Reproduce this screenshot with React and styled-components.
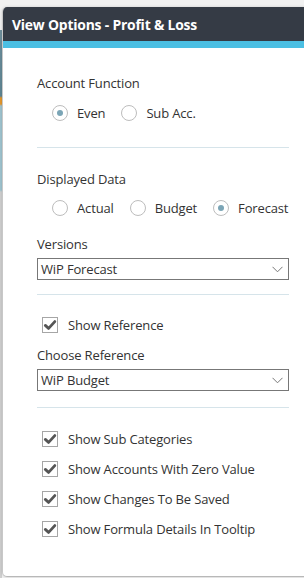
import React, { useState } from 'react'
import styled, { createGlobalStyle } from 'styled-components'

const GlobalStyle = createGlobalStyle`
    html, body {
        margin: 0;
        padding: 0;
        background: #f1f1f1;
        overflow: hidden;
    }
    body {
        font-family: 'Open Sans', 'Liberation Sans', sans-serif;
        font-size: 13px;
        letter-spacing: -0.15px;
        color: #333;
    }
`

const Backdrop = styled.div`
    display: flex;
    height: 578px;
    width: 304px;
    overflow: hidden;
`

const PageEdge = styled.div`
    flex: 0 0 2px;
    margin-top: 30px;
    background: linear-gradient(
        to bottom,
        #6f8f9c 0px,
        #5d8593 66px,
        #e3962c 68px,
        #e3962c 74px,
        #9fc3cf 76px,
        #9fc3cf 160px,
        #cfcfcf 162px,
        #cfcfcf 100%
    );
`

const Dialog = styled.div`
    flex: 0 0 320px;
    margin-top: 7px;
    height: 569px;
    display: flex;
    flex-direction: column;
    background: #fff;
    border-left: 1px solid #c8c8c8;
    border-bottom: 1px solid #b8b8b8;
    border-radius: 5px 0 0 5px;
    overflow: hidden;
    box-shadow: 0 0 3px rgba(0, 0, 0, 0.15);
`

const Header = styled.div`
    height: 34px;
    display: flex;
    align-items: center;
    padding-left: 9px;
    background: #353b45;
    border-bottom: 7px solid #4bbfe3;
    h2 {
        margin: 0;
        color: #fff;
        font-size: 13.9px;
        font-weight: 700;
        letter-spacing: -0.2px;
    }
`

const Body = styled.div`
    width: 252px;
    padding: 26px 0 0 34px;
    display: flex;
    flex-direction: column;
`

const Label = styled.div`
    height: 18px;
    line-height: 18px;
    margin-top: ${p => p.$gap || 0}px;
`

const Divider = styled.hr`
    width: 100%;
    margin: ${p => p.$gap}px 0 0;
    border: none;
    border-top: 1px solid #d6e4ea;
    height: 0;
`

const RadioGroup = styled.div`
    display: flex;
    align-items: center;
    gap: 16px;
    height: 18px;
    margin-top: ${p => p.$gap}px;
    padding-left: 15px;
`

const RadioItem = styled.label`
    display: flex;
    align-items: center;
    gap: 9px;
    cursor: pointer;
    line-height: 18px;
`

const RadioCircle = styled.span`
    box-sizing: border-box;
    width: 16px;
    height: 16px;
    border-radius: 50%;
    border: 1px solid #bdbdbd;
    display: flex;
    align-items: center;
    justify-content: center;
    &::after {
        content: '';
        width: 6px;
        height: 6px;
        border-radius: 50%;
        background: ${p => (p.$checked ? '#7ba5b6' : 'transparent')};
    }
`

const Select = styled.div`
    box-sizing: border-box;
    height: 22px;
    margin-top: 5px;
    border: 1px solid #777;
    display: flex;
    align-items: center;
    justify-content: space-between;
    padding: 0 5px 0 3px;
    line-height: 20px;
    svg {
        display: block;
    }
`

const CheckRow = styled.label`
    display: flex;
    align-items: center;
    gap: 10px;
    height: 18px;
    line-height: 18px;
    margin-top: ${p => p.$gap}px;
    padding-left: 5px;
    cursor: pointer;
`

const CheckBox = styled.span`
    box-sizing: border-box;
    width: 16px;
    height: 16px;
    border: 1px solid #a6a6a6;
    display: flex;
    align-items: center;
    justify-content: center;
    svg {
        display: block;
    }
`

const Chevron = () => (
    <svg width="11" height="7" viewBox="0 0 11 7">
        <path d="M0.5 0.8 L5.5 5.8 L10.5 0.8" fill="none" stroke="#777" strokeWidth="1" />
    </svg>
)

const Tick = () => (
    <svg width="14" height="14" viewBox="0 0 14 14">
        <path
            d="M2.3 7.4 L5.6 10.4 L11.8 3.6"
            fill="none"
            stroke="#555"
            strokeWidth="2.8"
            strokeLinecap="round"
            strokeLinejoin="round"
        />
    </svg>
)

const Radio = ({ label, checked, onSelect }) => (
    <RadioItem onClick={onSelect}>
        <RadioCircle $checked={checked} />
        {label}
    </RadioItem>
)

const Check = ({ label, checked, gap, onToggle }) => (
    <CheckRow $gap={gap} onClick={onToggle}>
        <CheckBox>{checked && <Tick />}</CheckBox>
        {label}
    </CheckRow>
)

const App = () => {
    const [accountFn, setAccountFn] = useState('Even')
    const [dataType, setDataType] = useState('Forecast')
    const [flags, setFlags] = useState({
        reference: true,
        subCategories: true,
        zeroValue: true,
        changes: true,
        formula: true,
    })

    const toggle = key => setFlags(f => ({ ...f, [key]: !f[key] }))

    return (
        <>
            <GlobalStyle />
            <Backdrop>
                <PageEdge />
                <Dialog>
                    <Header>
                        <h2>View Options - Profit &amp; Loss</h2>
                    </Header>
                    <Body>
                        <Label>Account Function</Label>
                        <RadioGroup $gap={12}>
                            {['Even', 'Sub Acc.'].map(o => (
                                <Radio key={o} label={o} checked={accountFn === o} onSelect={() => setAccountFn(o)} />
                            ))}
                        </RadioGroup>
                        <Divider $gap={25} />

                        <Label $gap={22}>Displayed Data</Label>
                        <RadioGroup $gap={11}>
                            {['Actual', 'Budget', 'Forecast'].map(o => (
                                <Radio key={o} label={o} checked={dataType === o} onSelect={() => setDataType(o)} />
                            ))}
                        </RadioGroup>
                        <Label $gap={18}>Versions</Label>
                        <Select>
                            <span>WiP Forecast</span>
                            <Chevron />
                        </Select>
                        <Divider $gap={14} />

                        <Check label="Show Reference" gap={21} checked={flags.reference} onToggle={() => toggle('reference')} />
                        <Label $gap={12}>Choose Reference</Label>
                        <Select>
                            <span>WiP Budget</span>
                            <Chevron />
                        </Select>
                        <Divider $gap={16} />

                        <Check label="Show Sub Categories" gap={22} checked={flags.subCategories} onToggle={() => toggle('subCategories')} />
                        <Check label="Show Accounts With Zero Value" gap={12} checked={flags.zeroValue} onToggle={() => toggle('zeroValue')} />
                        <Check label="Show Changes To Be Saved" gap={12} checked={flags.changes} onToggle={() => toggle('changes')} />
                        <Check label="Show Formula Details In Tooltip" gap={12} checked={flags.formula} onToggle={() => toggle('formula')} />
                    </Body>
                </Dialog>
            </Backdrop>
        </>
    )
}

export default App
